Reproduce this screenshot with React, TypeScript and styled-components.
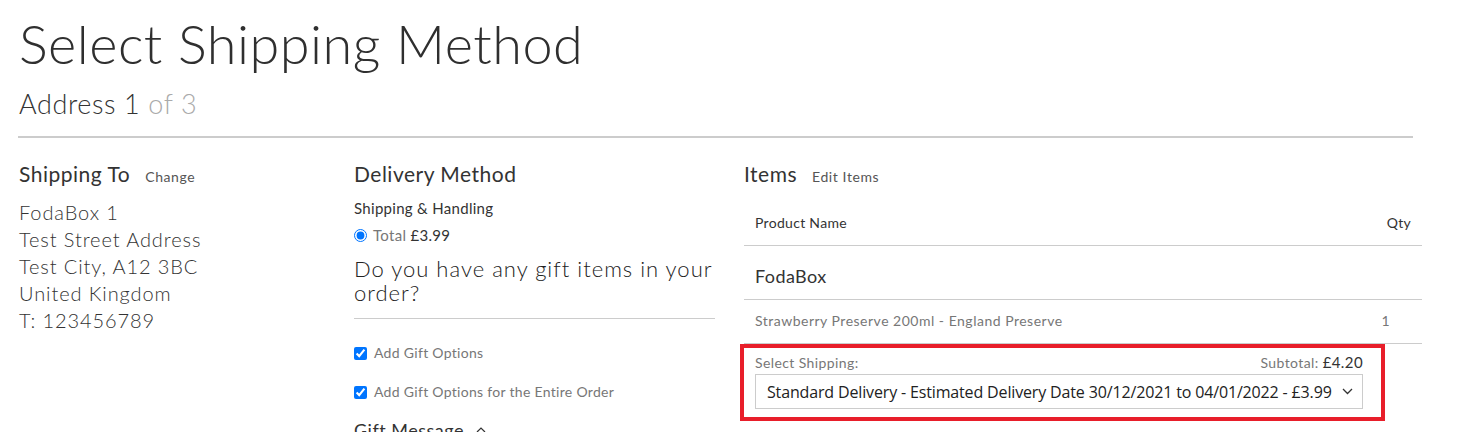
import React from "react";
import styled, { createGlobalStyle } from "styled-components";

const GlobalStyle = createGlobalStyle`
  html, body {
    margin: 0;
    padding: 0;
    background: #fff;
  }
  body {
    font-family: "Lato", "Open Sans", sans-serif;
    color: #333;
  }
  * {
    box-sizing: border-box;
  }
`;

const Page = styled.div`
  width: 1413px;
  padding: 0 0 0 19px;
`;

const Title = styled.h1`
  margin: 13px 0 0 0;
  font-size: 54px;
  font-weight: 300;
  line-height: 62px;
  letter-spacing: 0.5px;
  color: #2f2f2f;
`;

const SubTitle = styled.h2`
  margin: 14px 0 0 0;
  font-size: 27px;
  font-weight: 300;
  line-height: 30px;
  color: #333;
  letter-spacing: 0.6px;
`;

const Muted = styled.span`
  color: #aaa;
`;

const Rule = styled.hr`
  margin: 17px 0 0 -1px;
  border: 0;
  border-top: 2px solid #ccc;
  width: 1395px;
`;

const Columns = styled.div`
  display: grid;
  grid-template-columns: 335px 390px 678px;
  margin-top: 23px;
`;

const Column = styled.section`
  display: flex;
  flex-direction: column;
`;

const HeadRow = styled.div`
  display: flex;
  align-items: baseline;
  gap: 15px;
  height: 26px;
`;

const Heading = styled.h3`
  margin: 0;
  font-size: 21px;
  font-weight: 400;
  line-height: 26px;
  color: #333;
  letter-spacing: 0.5px;
`;

const SmallLink = styled.a`
  font-size: 14px;
  color: #555;
  text-decoration: none;
  letter-spacing: 0.6px;
`;

const Address = styled.div`
  margin-top: 12px;
  font-size: 20px;
  font-weight: 300;
  line-height: 27px;
  color: #333;
  letter-spacing: 0.9px;
`;

const Label = styled.div`
  margin-top: 12px;
  font-size: 15px;
  line-height: 18px;
  color: #333;
  letter-spacing: 0.3px;
`;

const RadioRow = styled.label`
  display: flex;
  align-items: center;
  gap: 6px;
  margin-top: 9px;
  font-size: 15px;
  line-height: 18px;
  color: #777;
  letter-spacing: 0.3px;
  input {
    margin: 0;
    width: 13px;
    height: 13px;
  }
  strong {
    color: #333;
    font-weight: 400;
  }
`;

const Question = styled.h4`
  margin: 13px 0 0 0;
  font-size: 22px;
  font-weight: 300;
  line-height: 24px;
  color: #222;
  letter-spacing: 1px;
  padding-right: 4px;
`;

const ShortRule = styled.hr`
  margin: 13px 0 0 0;
  border: 0;
  border-top: 1px solid #ccc;
  width: 361px;
`;

const CheckRow = styled.label<{ $gap: number }>`
  display: flex;
  align-items: center;
  gap: 7px;
  margin-top: ${(p) => p.$gap}px;
  font-size: 14px;
  line-height: 18px;
  color: #777;
  letter-spacing: 0.3px;
  input {
    margin: 0;
    width: 13px;
    height: 13px;
  }
`;

const Toggle = styled.div`
  display: flex;
  align-items: center;
  gap: 12px;
  margin-top: 18px;
  font-size: 18px;
  line-height: 22px;
  color: #333;
  letter-spacing: 0.5px;
`;

const Table = styled.div`
  margin-top: 12px;
  width: 678px;
`;

const Row = styled.div<{ $h: number; $shift?: number }>`
  display: flex;
  align-items: center;
  justify-content: space-between;
  height: ${(p) => p.$h}px;
  padding: 0 11px;
  ${(p) =>
    p.$shift
      ? p.$shift > 0
        ? `padding-top: ${p.$shift}px;`
        : `padding-bottom: ${-p.$shift}px;`
      : ""}
  border-bottom: 1px solid #ccc;
`;

const HeaderCell = styled.span`
  font-size: 14px;
  color: #333;
  letter-spacing: 0.3px;
`;

const GroupName = styled.span`
  font-size: 18px;
  color: #333;
  letter-spacing: 0.4px;
`;

const Cell = styled.span<{ $right?: boolean }>`
  font-size: 14px;
  color: #777;
  letter-spacing: 0.5px;
  ${(p) => (p.$right ? "padding-right: 21px;" : "")}
`;

const Highlight = styled.div`
  margin-left: -4px;
  width: 645px;
  border: 4px solid #e81e2a;
  padding: 4px 18px 8px 11px;
  margin-top: 0;
`;

const ShipHead = styled.div`
  display: flex;
  justify-content: space-between;
  align-items: baseline;
  font-size: 14px;
  line-height: 21px;
  color: #777;
  letter-spacing: 0.4px;
  strong {
    color: #333;
    font-weight: 400;
    font-size: 15px;
  }
`;

const SelectWrap = styled.div`
  position: relative;
  margin-top: 1px;
`;

const Select = styled.select`
  appearance: none;
  width: 100%;
  height: 35px;
  padding: 0 22px 0 11px;
  border: 1px solid #ccc;
  background: #fff;
  font-family: "Open Sans", "Noto Sans", sans-serif;
  font-size: 16px;
  color: #222;
  border-radius: 0;
  letter-spacing: -0.15px;
`;

const Chevron = styled.svg`
  position: absolute;
  right: 10px;
  top: 14px;
  pointer-events: none;
`;

export default function App() {
  return (
    <Page>
      <GlobalStyle />
      <Title>Select Shipping Method</Title>
      <SubTitle>
        Address 1 <Muted>of 3</Muted>
      </SubTitle>
      <Rule />
      <Columns>
        <Column>
          <HeadRow>
            <Heading>Shipping To</Heading>
            <SmallLink href="#">Change</SmallLink>
          </HeadRow>
          <Address>
            FodaBox 1
            <br />
            Test Street Address
            <br />
            Test City, A12 3BC
            <br />
            United Kingdom
            <br />
            T: 123456789
          </Address>
        </Column>
        <Column>
          <HeadRow>
            <Heading>Delivery Method</Heading>
          </HeadRow>
          <Label>Shipping &amp; Handling</Label>
          <RadioRow>
            <input type="radio" defaultChecked name="ship" />
            <span>
              Total <strong>£3.99</strong>
            </span>
          </RadioRow>
          <Question>Do you have any gift items in your order?</Question>
          <ShortRule />
          <CheckRow $gap={25}>
            <input type="checkbox" defaultChecked />
            Add Gift Options
          </CheckRow>
          <CheckRow $gap={21}>
            <input type="checkbox" defaultChecked />
            Add Gift Options for the Entire Order
          </CheckRow>
          <Toggle>
            Gift Message
            <svg width="10" height="6" viewBox="0 0 10 6">
              <path d="M1 5 L5 1 L9 5" fill="none" stroke="#333" strokeWidth="1.2" />
            </svg>
          </Toggle>
        </Column>
        <Column>
          <HeadRow>
            <Heading>Items</Heading>
            <SmallLink href="#">Edit Items</SmallLink>
          </HeadRow>
          <Table>
            <Row $h={47}>
              <HeaderCell>Product Name</HeaderCell>
              <HeaderCell>Qty</HeaderCell>
            </Row>
            <Row $h={54} $shift={6}>
              <GroupName>FodaBox</GroupName>
            </Row>
            <Row $h={44} $shift={-3}>
              <Cell>Strawberry Preserve 200ml - England Preserve</Cell>
              <Cell $right>1</Cell>
            </Row>
          </Table>
          <Highlight>
            <ShipHead>
              <span>Select Shipping:</span>
              <span>
                Subtotal: <strong>£4.20</strong>
              </span>
            </ShipHead>
            <SelectWrap>
              <Select defaultValue="std">
                <option value="std">
                  Standard Delivery - Estimated Delivery Date 30/12/2021 to 04/01/2022 - £3.99
                </option>
              </Select>
              <Chevron width="11" height="7" viewBox="0 0 11 7">
                <path d="M1 1 L5.5 5.5 L10 1" fill="none" stroke="#333" strokeWidth="1.3" />
              </Chevron>
            </SelectWrap>
          </Highlight>
        </Column>
      </Columns>
    </Page>
  );
}
